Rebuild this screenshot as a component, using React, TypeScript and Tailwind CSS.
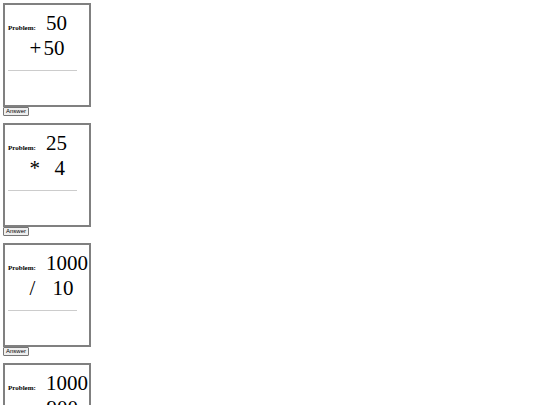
import React from 'react';

type Problem = {
  a: number;
  op: string;
  b: number;
  opW: string;
};

const problems: Problem[] = [
  { a: 50, op: '+', b: 50, opW: 'w-[14px]' },
  { a: 25, op: '*', b: 4, opW: 'w-[25px]' },
  { a: 1000, op: '/', b: 10, opW: 'w-[23px]' },
  { a: 1000, op: '-', b: 900, opW: 'w-[17px]' },
];

function Card({ p }: { p: Problem }) {
  return (
    <div className="mb-[7px]">
      <div className="w-[88px] h-[104px] border-2 border-[#808080] bg-white text-black font-['Liberation_Serif',serif]">
        <div className="pt-[6px] pl-[3px]">
          {/* first number */}
          <div className="h-[25px] leading-[25px] whitespace-nowrap">
            <span className="inline-block w-[38px] text-[7px] font-bold">Problem:</span>
            <span className="text-[21px]">{p.a}</span>
          </div>
          {/* operator + second number */}
          <div className="h-[25px] leading-[25px] text-[21px] pl-[21.5px] whitespace-nowrap">
            <span className={`inline-block ${p.opW}`}>{p.op}</span>
            <span>{p.b}</span>
          </div>
          <div className="mt-[9px] h-px w-[69px] bg-[#cccccc]" />
        </div>
      </div>
      <button className="block h-[9px] px-[2px] border border-[#767676] bg-[#efefef] rounded-[1px] text-[6px] leading-[7px] text-black font-['Liberation_Sans',Arial,sans-serif]">
        Answer
      </button>
    </div>
  );
}

export default function App() {
  return (
    <div className="w-[540px] h-[405px] overflow-hidden bg-white pt-[3px] pl-[3px]">
      {problems.map((p, i) => (
        <Card key={i} p={p} />
      ))}
    </div>
  );
}
